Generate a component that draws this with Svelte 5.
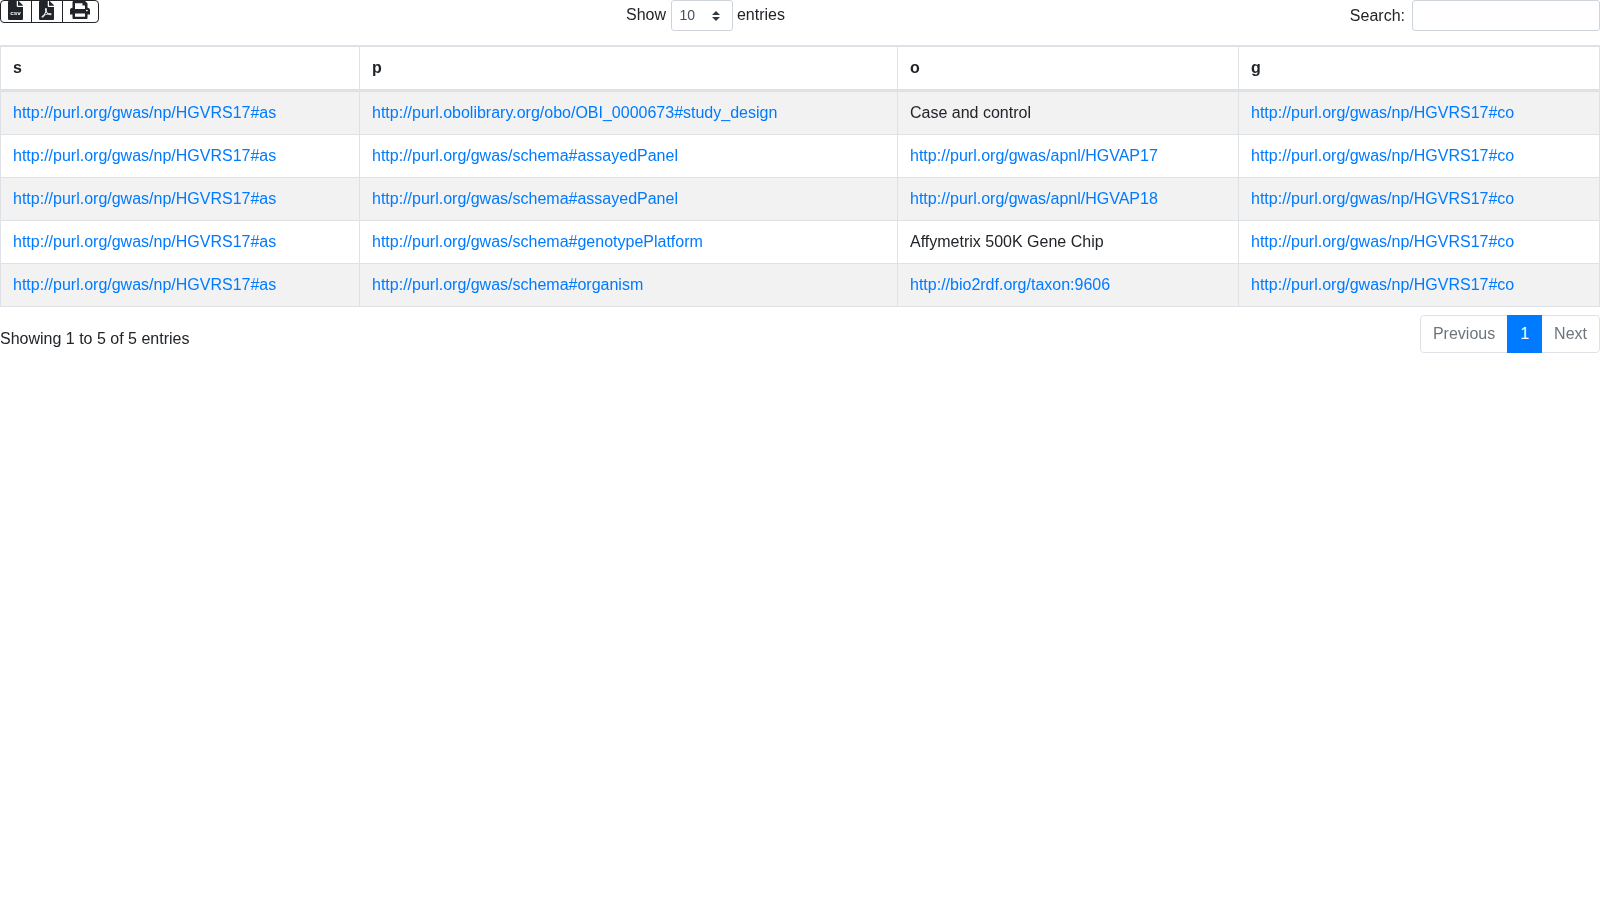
<script>
  const rows = [
    ['http://purl.obolibrary.org/obo/OBI_0000673#study_design', 'Case and control', false],
    ['http://purl.org/gwas/schema#assayedPanel', 'http://purl.org/gwas/apnl/HGVAP17', true],
    ['http://purl.org/gwas/schema#assayedPanel', 'http://purl.org/gwas/apnl/HGVAP18', true],
    ['http://purl.org/gwas/schema#genotypePlatform', 'Affymetrix 500K Gene Chip', false],
    ['http://purl.org/gwas/schema#organism', 'http://bio2rdf.org/taxon:9606', true]
  ];
  const s = 'http://purl.org/gwas/np/HGVRS17#as';
  const g = 'http://purl.org/gwas/np/HGVRS17#co';
</script>

<div class="page">
  <div class="top">
    <div class="btns">
      <button class="first" aria-label="csv">
        <svg viewBox="0 0 384 512" width="15" height="19" preserveAspectRatio="none">
          <path d="M224 136V0H24C10.700 0 0 10.700 0 24v464c0 13.300 10.700 24 24 24h336c13.300 0 24-10.700 24-24V160H248c-13.200 0-24-10.800-24-24zM384 121.900V128H256V0h6.100c6.400 0 12.500 2.500 17 7l97.900 98c4.500 4.500 7 10.600 7 16.900z"/>
          <text x="192" y="390" text-anchor="middle" class="csv">csv</text>
        </svg>
      </button>
      <button aria-label="pdf">
        <svg viewBox="0 0 384 512" width="15" height="19" preserveAspectRatio="none"><path d="M181.900 256.100c-5-16-4.900-46.900-2-46.900 8.400 0 7.600 36.900 2 46.900zm-1.700 47.200c-7.700 20.200-17.300 43.300-28.400 62.700 18.300-7 39-17.200 62.900-21.900-12.700-9.600-24.900-23.400-34.500-40.800zM86.100 428.100c0 .8 13.200-5.400 34.900-40.200-6.700 6.300-29.100 24.500-34.900 40.200zM248 160h136v328c0 13.300-10.700 24-24 24H24c-13.300 0-24-10.700-24-24V24C0 10.700 10.700 0 24 0h200v136c0 13.200 10.800 24 24 24zm-8 171.800c-20-12.200-33.300-29-42.700-53.800 4.500-18.500 11.600-46.600 6.200-64.200-4.700-29.400-42.400-26.500-47.800-6.800-5 18.300-.4 44.100 8.100 77-11.600 27.600-28.700 64.600-40.800 85.800-.1 0-.1.100-.2.100-27.100 13.900-73.600 44.500-54.500 68 5.600 6.900 16 10 21.500 10 17.900 0 35.700-18 61.100-61.800 25.800-8.500 54.100-19.100 79-23.200 21.700 11.800 47.100 19.500 64 19.500 29.200 0 31.200-32 19.700-43.400-13.900-13.600-54.300-9.700-73.600-7.200zM377 105L279 7c-4.500-4.500-10.600-7-17-7h-6v128h128v-6.100c0-6.300-2.500-12.400-7-16.900zm-74.100 255.300c4.100-2.700-2.500-11.900-42.800-9 37.100 15.800 42.800 9 42.800 9z"/></svg>
      </button>
      <button class="last" aria-label="print">
        <svg viewBox="0 0 512 512" width="20" height="18" preserveAspectRatio="none"><path d="M448 192V77.250c0-8.490-3.370-16.620-9.370-22.630L393.370 9.370c-6-6-14.140-9.370-22.630-9.370H96C78.330 0 64 14.330 64 32v160c-35.350 0-64 28.650-64 64v112c0 8.840 7.160 16 16 16h48v96c0 17.670 14.330 32 32 32h320c17.670 0 32-14.330 32-32v-96h48c8.840 0 16-7.160 16-16V256c0-35.350-28.650-64-64-64zm-64 256H128v-96h256v96zm0-224H128V64h192v48c0 8.840 7.160 16 16 16h48v96zm48 72c-13.250 0-24-10.750-24-24 0-13.260 10.750-24 24-24s24 10.740 24 24c0 13.250-10.750 24-24 24z"/></svg>
      </button>
    </div>
    <div class="len">
      Show
      <span class="sel">10<svg viewBox="0 0 4 5" width="8" height="10"><path d="M2 0L0 2h4zm0 5L0 3h4z"/></svg></span>
      entries
    </div>
    <div class="search">Search: <input type="search" /></div>
  </div>

  <table>
    <thead>
      <tr><th class="c1">s</th><th class="c2">p</th><th class="c3">o</th><th>g</th></tr>
    </thead>
    <tbody>
      {#each rows as r}
        <tr>
          <td><a href="#s">{s}</a></td>
          <td><a href="#p">{r[0]}</a></td>
          <td>{#if r[2]}<a href="#o">{r[1]}</a>{:else}{r[1]}{/if}</td>
          <td><a href="#g">{g}</a></td>
        </tr>
      {/each}
    </tbody>
  </table>

  <div class="bottom">
    <div class="info">Showing 1 to 5 of 5 entries</div>
    <ul class="pager">
      <li>Previous</li>
      <li class="on">1</li>
      <li>Next</li>
    </ul>
  </div>
</div>

<style>
  :global(body) {
    margin: 0;
    font-family: "Liberation Sans", Arial, sans-serif;
    font-size: 16px;
    line-height: 1.5;
    color: #212529;
    background: #fff;
  }

  /* own layer: text gets the same greyscale antialiasing as the reference */
  .page {
    will-change: opacity;
  }

  .top {
    display: grid;
    grid-template-columns: 441px 529px 1fr;
    height: 45px;
  }

  .btns {
    display: flex;
    align-items: flex-start;
  }

  button {
    display: flex;
    align-items: flex-start;
    justify-content: center;
    box-sizing: border-box;
    height: 23px;
    width: 32px;
    padding: 0;
    margin: 0 0 0 -1px;
    background: #fff;
    border: 1px solid #212529;
    color: #212529;
  }

  button svg {
    fill: #212529;
    margin: 0 2px 0 0;
    flex: none;
  }

  .csv {
    fill: #fff;
    font-family: "Liberation Sans", Arial, sans-serif;
    font-size: 165px;
    font-weight: 700;
  }

  .first {
    margin-left: 0;
    border-radius: 4px 0 0 4px;
  }

  .last {
    width: 37px;
    border-radius: 0 4px 4px 0;
  }

  .len {
    text-align: center;
    line-height: 30px;
  }

  .sel {
    display: inline-flex;
    align-items: center;
    justify-content: space-between;
    box-sizing: border-box;
    width: 62px;
    height: 31px;
    padding: 0 12px 2px 8px;
    font-size: 14px;
    color: #495057;
    border: 1px solid #ced4da;
    border-radius: 3px;
    vertical-align: top;
  }

  .sel svg {
    fill: #343a40;
    margin-top: 2px;
  }

  .search {
    display: flex;
    justify-content: flex-end;
    align-items: flex-start;
    gap: 7px;
    line-height: 31px;
  }

  input {
    box-sizing: border-box;
    width: 188px;
    height: 31px;
    border: 1px solid #ced4da;
    border-radius: 3px;
    padding: 0;
    margin: 0;
    background: #fff;
  }

  table {
    box-sizing: border-box;
    width: 100%;
    border-collapse: separate;
    border-spacing: 0;
    table-layout: fixed;
    border: 1px solid #dee2e6;
  }

  th, td {
    padding: 9px 12px;
    border: 0 solid #dee2e6;
    border-width: 1px 1px 0 0;
    text-align: left;
    white-space: nowrap;
    overflow: hidden;
  }

  th {
    border-bottom-width: 2px;
  }

  th:last-child, td:last-child {
    border-right-width: 0;
  }

  .c1 { width: 359px; box-sizing: border-box; }
  .c2 { width: 538px; box-sizing: border-box; }
  .c3 { width: 341px; box-sizing: border-box; }

  tbody tr:nth-child(odd) {
    background: #f2f2f2;
  }

  a {
    color: #007bff;
    text-decoration: none;
  }

  .bottom {
    display: flex;
    justify-content: space-between;
    align-items: flex-start;
    padding-top: 8px;
  }

  .info {
    padding-top: 12px;
  }

  .pager {
    display: flex;
    list-style: none;
    margin: 0;
    padding: 0;
  }

  .pager li {
    padding: 6px 12px;
    margin-left: -1px;
    border: 1px solid #dee2e6;
    color: #6c757d;
  }

  .pager li:first-child {
    border-radius: 4px 0 0 4px;
  }

  .pager li:last-child {
    border-radius: 0 4px 4px 0;
  }

  .pager .on {
    position: relative;
    z-index: 1;
    background: #007bff;
    border-color: #007bff;
    color: #fff;
  }
</style>
